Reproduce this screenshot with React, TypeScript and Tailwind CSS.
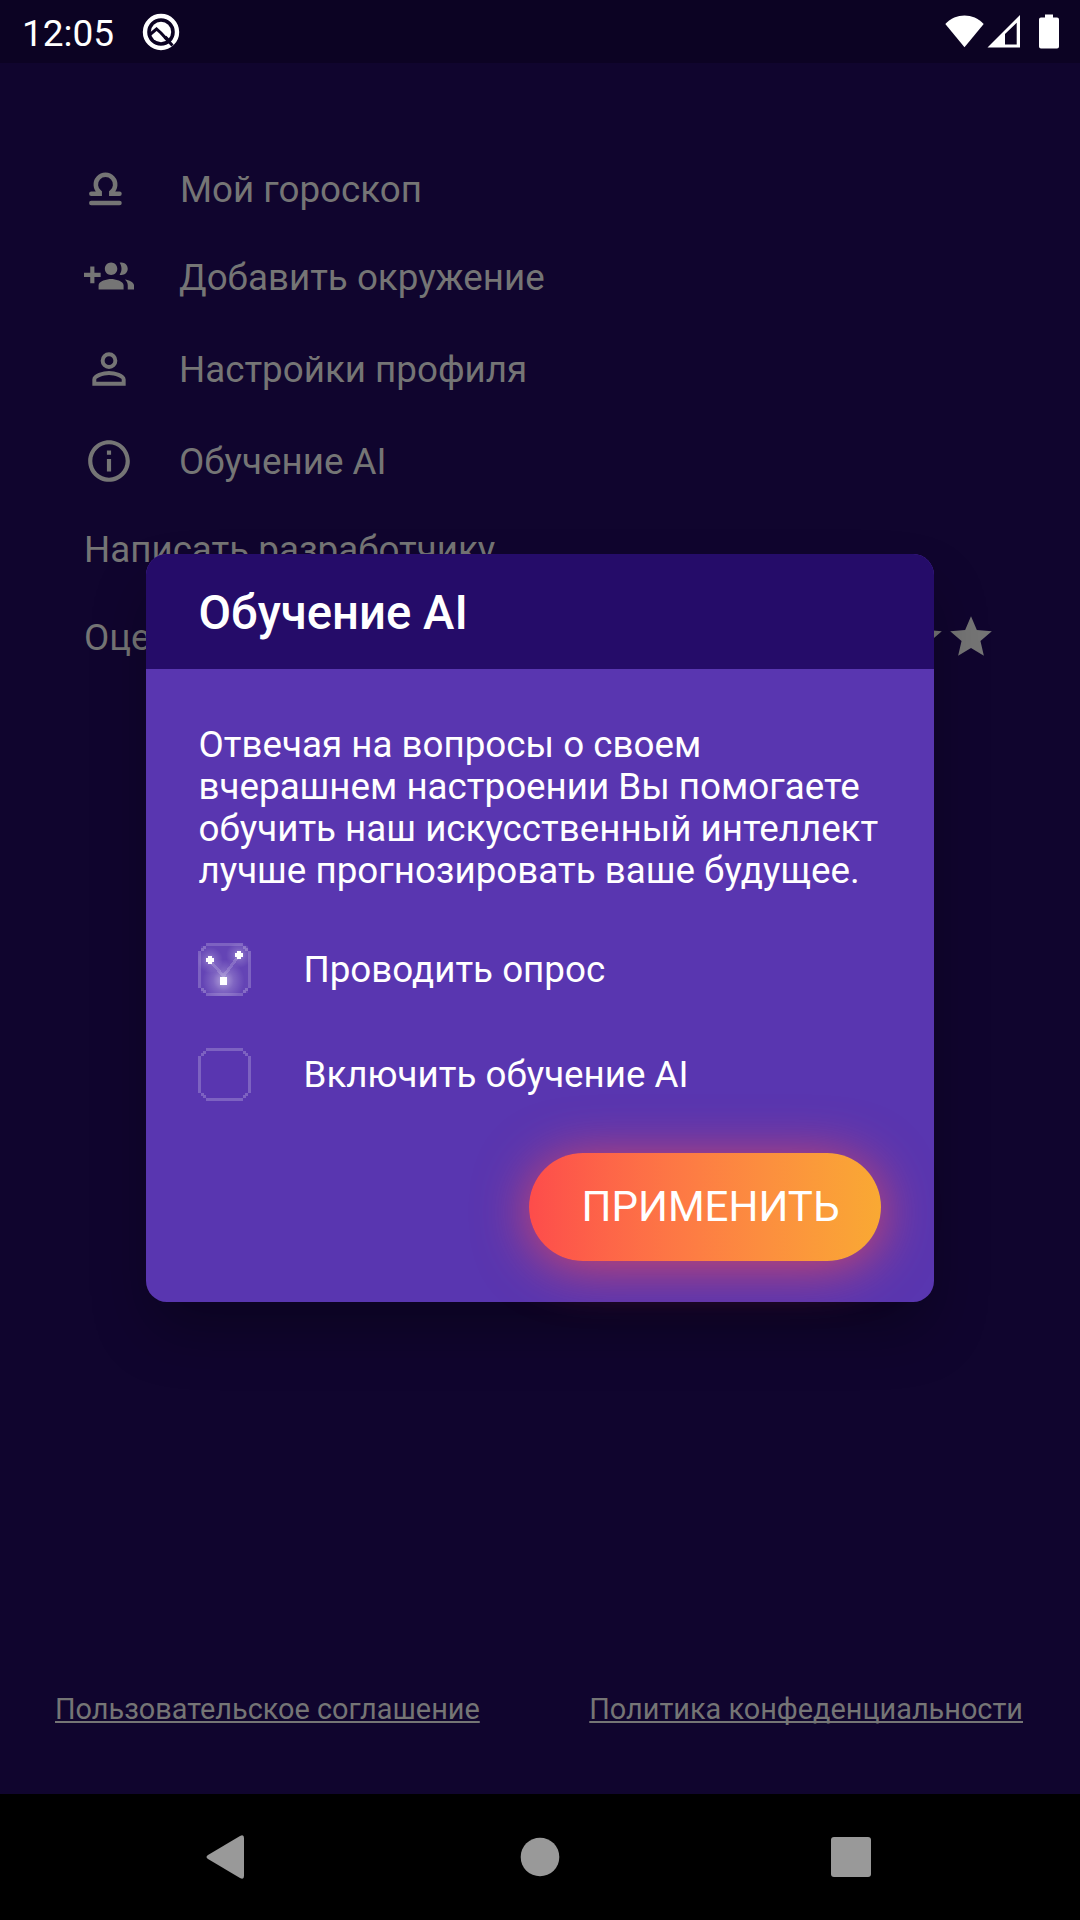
import React from "react";

const menuIcon = "fill-[#757575]";

function Star({ className = "" }: { className?: string }) {
  return (
    <svg viewBox="0 0 24 24" className={`size-[50px] fill-[#757575] ${className}`}>
      <path d="M12 17.27 18.18 21l-1.64-7.03L22 9.24l-7.19-.61L12 2 9.19 8.63 2 9.24l5.46 4.73L5.82 21z" />
    </svg>
  );
}

function MenuRow({ icon, label, className }: { icon: React.ReactNode; label: string; className: string }) {
  return (
    <div className={`flex items-center ${className}`}>
      <div className="w-[95px] shrink-0">{icon}</div>
      <span className="pt-[2px]">{label}</span>
    </div>
  );
}

// Low-resolution sprite: 18 cells across, each one drawn 3px wide.
function Checkbox({ checked = false }: { checked?: boolean }) {
  return (
    <svg viewBox="0 0 53 53" className="mb-px size-[53px] shrink-0" shapeRendering="crispEdges">
      <defs>
        <radialGradient id="glow">
          <stop offset="0" stopColor="#fff" stopOpacity="0.5" />
          <stop offset="0.5" stopColor="#fff" stopOpacity="0.18" />
          <stop offset="1" stopColor="#fff" stopOpacity="0" />
        </radialGradient>
      </defs>
      <g fill="#fff" fillOpacity="0.22">
        <path d="M8 0h37v3H8zM8 50h37v3H8zM0 8h3v37H0zM50 8h3v37h-3z" />
        <path d="M5 3h3v3H5zM3 5h3v3H3zM45 3h3v3h-3zM47 5h3v3h-3zM5 47h3v3H5zM3 45h3v3H3zM45 47h3v3h-3zM47 45h3v3h-3z" />
      </g>
      {checked && (
        <g>
          <rect x="3" y="3" width="47" height="47" fill="#fff" fillOpacity="0.07" />
          <circle cx="25.500" cy="37.500" r="21" fill="url(#glow)" />
          <circle cx="12" cy="17" r="13" fill="url(#glow)" opacity="0.7" />
          <circle cx="41" cy="12" r="13" fill="url(#glow)" opacity="0.7" />
          <path d="M13 19 25.500 33 40 14" fill="none" stroke="#fff" strokeOpacity="0.16" strokeWidth="3" />
          <g fill="#fff">
            <path d="M10 13h4v2h2v4h-2v2h-4v-2H8v-4h2z" />
            <path d="M39 8h4v2h2v4h-2v2h-4v-2h-2v-4h2z" />
            <rect x="22" y="34" width="7" height="8" />
          </g>
        </g>
      )}
    </svg>
  );
}

export default function App() {
  return (
    <div className="relative flex h-[1920px] w-[1080px] flex-col overflow-hidden bg-[#10052e] font-[Roboto,sans-serif] text-[36.75px] leading-[42px] text-[#757575]">
      <header className="flex h-[63px] shrink-0 items-center bg-[#0c0323] pl-[22px] pr-[21px] text-white">
        <span className="pt-[4px] text-[37px]">12:05</span>
        <svg viewBox="0 0 38 38" className="ml-[28px] size-[38px]">
          <circle cx="19" cy="19" r="16" fill="none" stroke="#fff" strokeWidth="4.400" />
          <circle cx="19" cy="19" r="10.200" fill="#fff" />
          <path d="M8 21.500 14.500 16 19 20 30.500 32.500" fill="none" stroke="#0c0323" strokeWidth="3" />
          <path d="M23 24 27.500 28.500" fill="none" stroke="#0c0323" strokeWidth="3.500" />
        </svg>
        <svg viewBox="0 0 116 36" className="ml-auto h-[36px] w-[116px] fill-white">
          <path d="M2.300 10C13 -1.300 30 -1.300 40.700 10L21.500 33.300z" />
          <path fillRule="evenodd" d="M44.500 33.500 77 1v32.500zM62 20v10.500h11.700V8.700z" />
          <path d="M102 .500h8v3h4a2 2 0 0 1 2 2v27a2 2 0 0 1-2 2H98a2 2 0 0 1-2-2v-27a2 2 0 0 1 2-2h4z" />
        </svg>
      </header>

      <nav className="flex flex-col pl-[84px] pt-[105px]">
        <MenuRow
          className="h-[42px] gap-px"
          label="Мой гороскоп"
          icon={
            <svg viewBox="0 0 33 34" className="ml-[4.500px] h-[34px] w-[33px]" fill="none" stroke="#757575" strokeWidth="4.500" strokeLinecap="round">
              <path d="M2.300 21.700H10.700V20.300A9.700 9.700 0 1 1 22.300 20.300V21.700H30.500M2.300 31H30.500" />
            </svg>
          }
        />
        <MenuRow
          className="mt-[46px] h-[42px]"
          label="Добавить окружение"
          icon={
            <svg viewBox="0 0 24 24" className={`size-[50px] ${menuIcon}`}>
              <path d="M8 10H5V7H3v3H0v2h3v3h2v-3h3v-2zm10 1c1.660 0 2.990-1.340 2.990-3S19.660 5 18 5c-.32 0-.63.05-.91.14.57.81.9 1.790.9 2.860s-.34 2.040-.9 2.860c.28.09.59.14.91.14zm-5 0c1.660 0 2.990-1.340 2.990-3S14.660 5 13 5s-3 1.340-3 3 1.340 3 3 3zm6.620 2.160c.83.73 1.380 1.660 1.380 2.840v2h3v-2c0-1.540-2.370-2.490-4.380-2.840zM13 13c-2 0-6 1-6 3v2h12v-2c0-2-4-3-6-3z" />
            </svg>
          }
        />
        <MenuRow
          className="mt-[50px] h-[42px]"
          label="Настройки профиля"
          icon={
            <svg viewBox="0 0 24 24" className={`size-[50px] ${menuIcon}`}>
              <path d="M12 5.900a2.100 2.100 0 1 1 0 4.200 2.100 2.100 0 0 1 0-4.200m0 9c2.970 0 6.100 1.460 6.100 2.100v1.100H5.900V17c0-.64 3.130-2.100 6.100-2.100M12 4a4 4 0 1 0 0 8 4 4 0 0 0 0-8m0 9c-2.670 0-8 1.340-8 4v3h16v-3c0-2.660-5.330-4-8-4" />
            </svg>
          }
        />
        <MenuRow
          className="mt-[50px] h-[42px]"
          label="Обучение AI"
          icon={
            <svg viewBox="0 0 24 24" className={`size-[50px] ${menuIcon}`}>
              <path d="M11 7h2v2h-2zm0 4h2v6h-2zm1-9C6.480 2 2 6.480 2 12s4.480 10 10 10 10-4.480 10-10S17.520 2 12 2m0 18c-4.410 0-8-3.590-8-8s3.590-8 8-8 8 3.590 8 8-3.590 8-8 8" />
            </svg>
          }
        />
        <div className="mt-[46px] flex h-[42px] items-center">
          <span className="pt-[2px]">Написать разработчику</span>
        </div>
        <div className="mt-[46px] flex h-[42px] items-center pr-[84px]">
          <span className="pt-[2px]">Оценить</span>
          <div className="ml-auto flex">
            <Star /><Star /><Star /><Star /><Star />
          </div>
        </div>
      </nav>

      <footer className="mt-auto flex shrink-0 items-start justify-between pb-[67px] pl-[55px] pr-[57px] text-[28.875px] leading-[36px]">
        <span className="underline [text-decoration-skip-ink:none]">Пользовательское соглашение</span>
        <span className="underline [text-decoration-skip-ink:none]">Политика конфеденциальности</span>
      </footer>
      <div className="flex h-[126px] shrink-0 items-center bg-black">
        <svg viewBox="0 0 1080 126" className="h-[126px] w-[1080px] fill-[#999]">
          <path d="M208 61 240 42Q244 40 244 44V82Q244 86 240 84L208 65Q205 63 208 61" />
          <circle cx="540" cy="63" r="19.300" />
          <rect x="831" y="43" width="40" height="40" rx="3" />
        </svg>
      </div>

      <section className="absolute left-[146px] top-[554px] flex h-[748px] w-[788px] flex-col rounded-[21px] bg-[#5936b0] text-white shadow-[0_32px_60px_-6px_rgba(0,0,0,0.3)]">
        <h2 className="flex h-[115px] shrink-0 items-center rounded-t-[21px] bg-[#250c69] pl-[52.500px] pt-[3px] text-[47.25px] font-medium leading-[55px]">
          Обучение AI
        </h2>
        <p className="mt-[55px] whitespace-pre-line pl-[52.500px]">
          {"Отвечая на вопросы о своем\nвчерашнем настроении Вы помогаете\nобучить наш искусственный интеллект\nлучше прогнозировать ваше будущее."}
        </p>
        <label className="mt-[51px] flex h-[54px] items-center gap-[52.500px] pl-[52px]">
          <Checkbox checked />
          <span>Проводить опрос</span>
        </label>
        <label className="mt-[51px] flex h-[54px] items-center gap-[52.500px] pl-[52px]">
          <Checkbox />
          <span>Включить обучение AI</span>
        </label>
        <button className="ml-[383px] mt-[51px] flex h-[108px] w-[352px] items-center justify-center rounded-[54px] bg-linear-to-r from-[#fd4c4b] to-[#f9a933] pl-[11px] text-[42px] shadow-[0_5px_53px_rgba(255,77,77,0.75)]">
          ПРИМЕНИТЬ
        </button>
      </section>
    </div>
  );
}
